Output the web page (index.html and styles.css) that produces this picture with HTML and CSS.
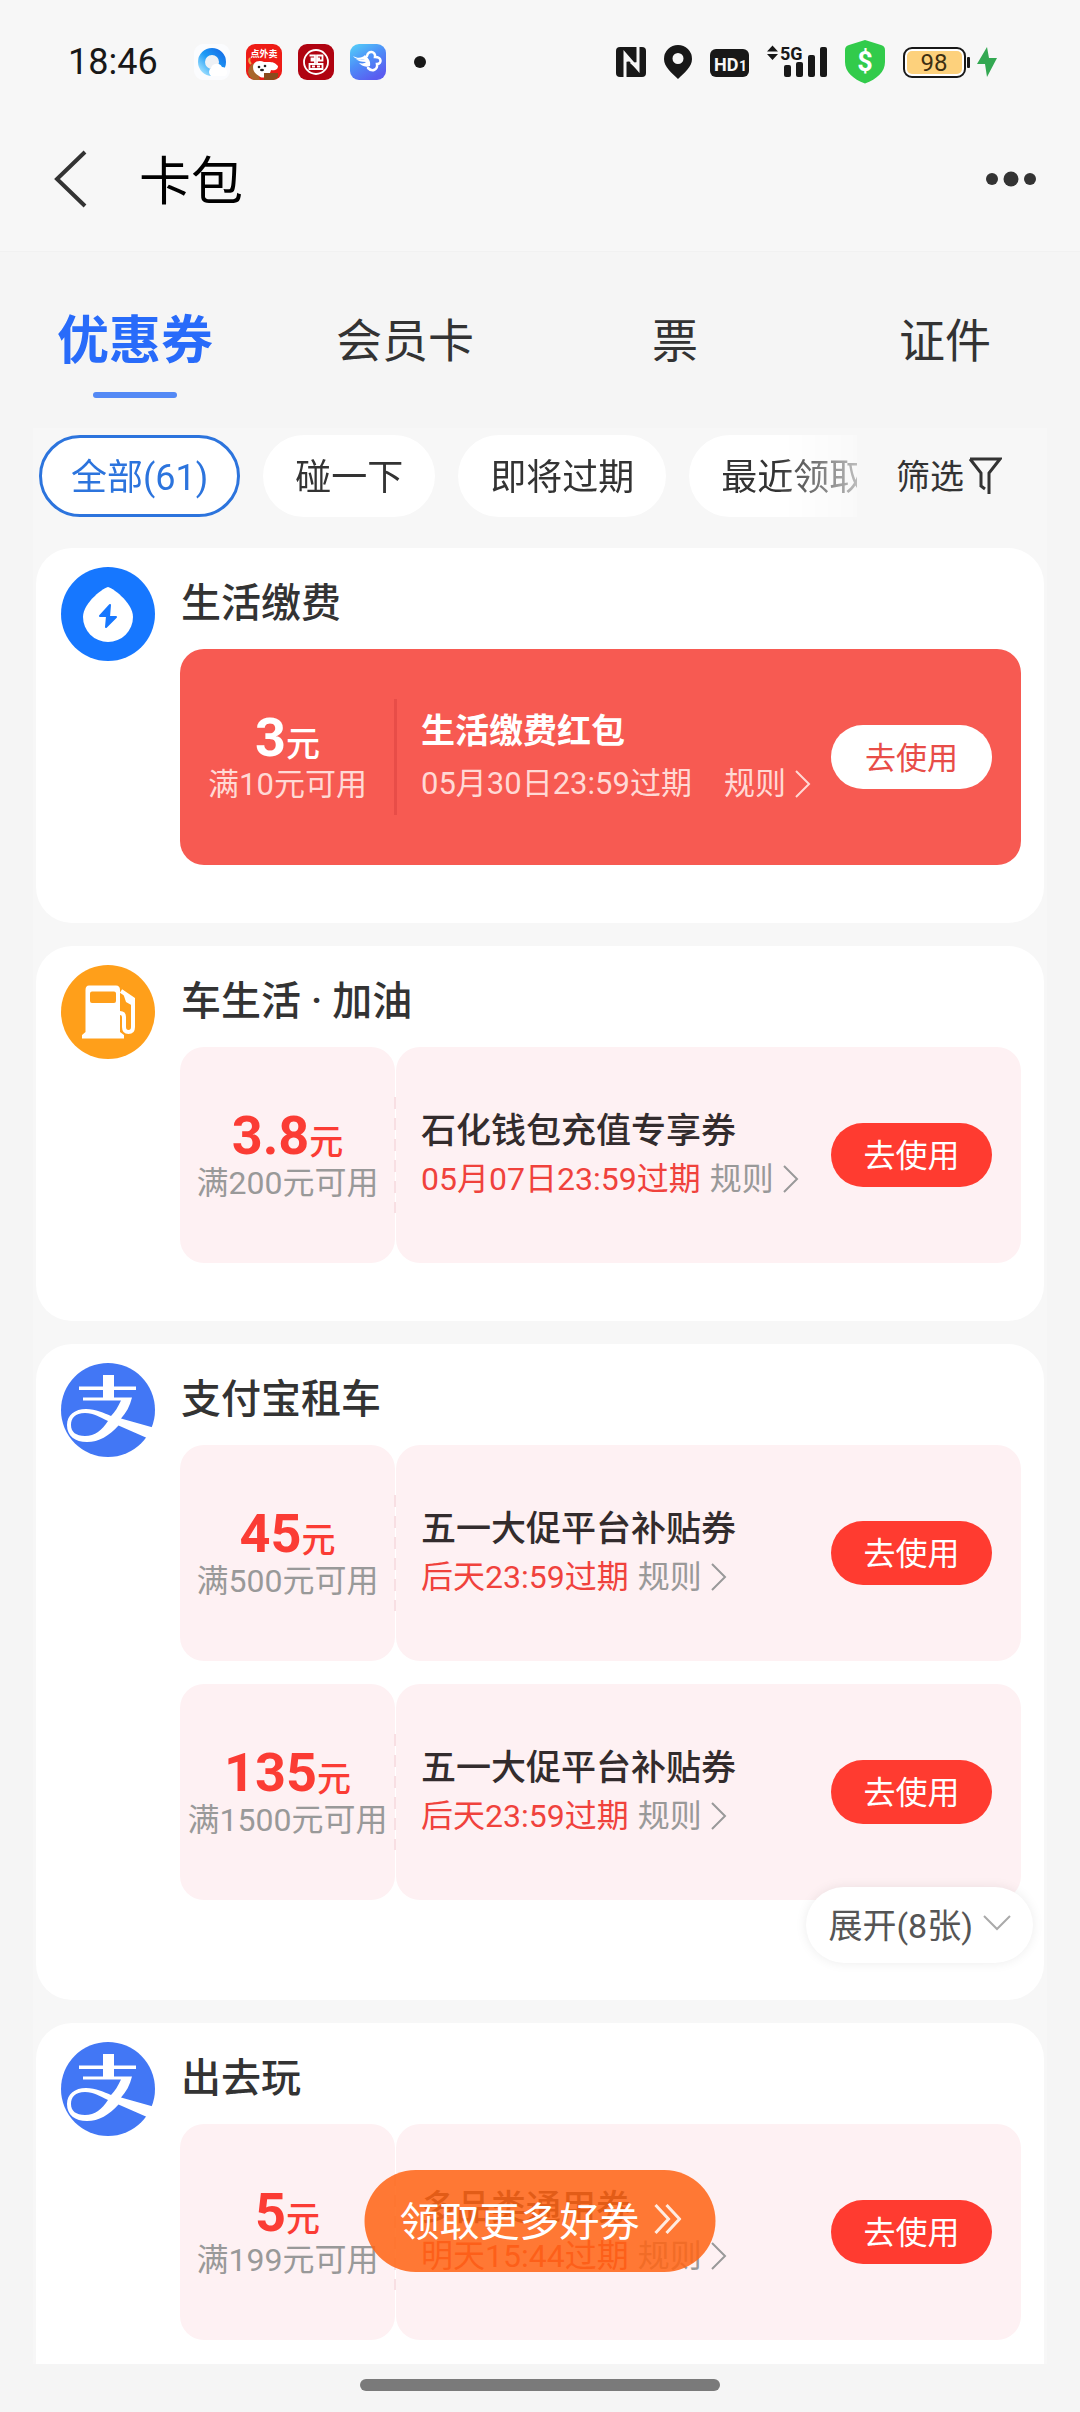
FILE: index.html
```html
<!DOCTYPE html>
<html lang="zh-CN">
<head>
<meta charset="utf-8">
<meta name="viewport" content="width=device-width, initial-scale=1">
<title>卡包</title>
<link rel="stylesheet" href="styles.css">
</head>
<body>
<svg class="defs" aria-hidden="true">
  <symbol id="chevron" viewBox="0 0 16 28"><path d="M1 1L14 14L1 27" fill="none" stroke="currentColor" stroke-width="2"/></symbol>
  <symbol id="alipay" viewBox="0 0 94 94">
    <circle cx="47" cy="47" r="47" fill="#4277f5"/>
    <g fill="#fff">
      <path d="M42 12H53V36H42Z"/>
      <path d="M18 23.500H75V27H18Z"/>
      <path fill-rule="evenodd" d="M22 34.500H71C69 43 65 50 60 55.500L92 64.500L86 75L57.500 62.500C48 73 38 79 26 79C14 79 6 73 6 62C6 52 14 46 25 46C35 46 43 50 50 53C54 49 57 44 60 37.500H22ZM47 58C38 54 33 50 24 50C14 50 10 55 10 62C10 69 15 73 24 73C34 73 41 67 47 58Z"/>
    </g>
  </symbol>
</svg>

<div class="statusbar">
  <time class="clock">18:46</time>
  <div class="notices">
    <svg width="36" height="36" viewBox="0 0 36 36">
      <defs><linearGradient id="ring" x1="0" y1="1" x2="1" y2="0"><stop offset="0" stop-color="#9fe0ff"/><stop offset=".5" stop-color="#1d9bf5"/><stop offset="1" stop-color="#1670e8"/></linearGradient></defs>
      <rect width="36" height="36" rx="9" fill="#fbfcfe"/>
      <circle cx="18" cy="18" r="10.500" fill="#eef1f5" stroke="url(#ring)" stroke-width="7"/>
      <path d="M17 32a5 5 0 0 1 0-8a6 6 0 0 1 11-1a5 5 0 0 1 3 9z" fill="#fff"/>
    </svg>
    <svg width="36" height="36" viewBox="0 0 36 36">
      <rect width="36" height="36" rx="9" fill="#ee1c16"/>
      <path d="M2 28C3 22 6 19 10 19L14 36H8C5 35 3 32 2 28Z" fill="#a8672c"/>
      <path d="M7 23C7 17 14 16 18 18C24 18 28 17 32 22C32 26 28 27 25 26C24 32 17 36 13 32C10 30 7 28 7 23Z" fill="#fff"/>
      <path d="M18 29H32V33Q30 36 27 36H18Z" fill="#8a4b1c"/>
      <circle cx="13" cy="23" r="1.300" fill="#222"/><circle cx="19" cy="22" r="1.300" fill="#222"/><ellipse cx="16" cy="26" rx="2" ry="1.300" fill="#222"/>
      <path d="M4 14q-2 3 1 6" stroke="#e9a94d" stroke-width="2" fill="none"/>
      <text x="18" y="13" class="app-label">点外卖</text>
    </svg>
    <svg width="36" height="36" viewBox="0 0 36 36">
      <rect width="36" height="36" rx="9" fill="#b00311"/>
      <circle cx="18" cy="18" r="12" fill="none" stroke="#fff" stroke-width="1.800"/>
      <path d="M11.500 11.500H17V14.500H13.500V16.500H17V20H11.500V25H24.500V20H19V16.500H24.500V11.500H19V14.500H22M14 22.500H17M19 22.500H22" fill="none" stroke="#fff" stroke-width="1.800"/>
    </svg>
    <svg width="36" height="36" viewBox="0 0 36 36">
      <defs><linearGradient id="sky" x1="0" y1="0" x2=".6" y2="1"><stop offset="0" stop-color="#55d3f8"/><stop offset=".5" stop-color="#4d90f8"/><stop offset="1" stop-color="#5a5cf0"/></linearGradient></defs>
      <rect width="36" height="36" rx="9" fill="url(#sky)"/>
      <path d="M3 12C8 15 12 14 15 11C18 14 21 17 20 22C15 24 11 21 9 19C13 20 15 19 16 18C11 18 8 17 6 15C10 16 13 16 15 15C9 16 5 15 3 12Z" fill="#fff"/>
      <path d="M17 12C18 6 26 7 25 13C32 13 32 20 27 20C28 26 22 28 18 24" fill="none" stroke="#fff" stroke-width="2.500" stroke-linecap="round"/>
    </svg>
    <span class="more-dot"></span>
  </div>
  <div class="signals">
    <svg width="30" height="52" viewBox="0 0 30 52">
      <rect y="11" width="30" height="30" rx="4" fill="#181818"/>
      <path d="M9 41V18L22 33V11" fill="none" stroke="#f7f7f7" stroke-width="3"/>
      <path d="M9 18V26L16 25ZM22 34V26L14 27Z" fill="#f7f7f7"/>
    </svg>
    <svg width="28" height="52" viewBox="0 0 28 52"><path fill="#181818" fill-rule="evenodd" d="M14 9a14 14 0 0 1 14 14c0 8-8 14-14 20C8 37 0 31 0 23A14 14 0 0 1 14 9Zm0 8a5 5 0 1 0 0 11a5 5 0 1 0 0-11Z"/></svg>
    <svg width="39" height="52" viewBox="0 0 39 52">
      <rect y="13" width="39" height="28" rx="6" fill="#181818"/>
      <text x="4" y="35" class="hd-label">HD</text><text x="29" y="35" class="hd-sub">1</text>
    </svg>
    <svg width="60" height="52" viewBox="0 0 60 52" fill="#181818">
      <path d="M5.500 9.500L11 15.500H0ZM5.500 24L11 18H0Z"/>
      <text x="13" y="24" class="net-label">5G</text>
      <rect x="17" y="29" width="7" height="12" rx="2"/><rect x="29" y="26" width="7" height="15" rx="2"/><rect x="41" y="19" width="7" height="22" rx="2"/><rect x="53" y="11" width="7" height="30" rx="2"/>
    </svg>
    <svg width="40" height="52" viewBox="0 0 40 52">
      <path d="M20 4L36 9Q40 10 40 14V26C40 36 32 43 20 47.500C8 43 0 36 0 26V14Q0 10 4 9Z" fill="#32cb4b"/>
      <text x="20" y="35" class="coin-label">$</text>
    </svg>
    <svg width="94" height="52" viewBox="0 0 94 52">
      <rect x="1" y="12" width="61" height="29" rx="8" fill="#fff" stroke="#181818" stroke-width="2"/>
      <rect x="4" y="15" width="55" height="23" rx="5" fill="#fdd17c"/>
      <rect x="64" y="21" width="3" height="11" rx="1" fill="#181818"/>
      <text x="31" y="35" class="battery-label">98</text>
      <path d="M84 11L74 28H82L84 41L94 22H86Z" fill="#33a852"/>
    </svg>
  </div>
</div>

<header class="navbar">
  <button class="icon-button" aria-label="返回"><svg width="34" height="58" viewBox="0 0 34 58"><path d="M31 2L3 29L31 56" fill="none" stroke="#333" stroke-width="4"/></svg></button>
  <h1 class="page-title">卡包</h1>
  <button class="icon-button" aria-label="更多"><svg width="50" height="16" viewBox="0 0 50 16" fill="#333"><circle cx="6" cy="8" r="6"/><circle cx="25" cy="8" r="7.500"/><circle cx="44" cy="8" r="6"/></svg></button>
</header>

<nav class="tabs">
  <a class="tab tab-active" href="#coupons">优惠券</a>
  <a class="tab" href="#members">会员卡</a>
  <a class="tab" href="#tickets">票</a>
  <a class="tab" href="#ids">证件</a>
</nav>

<main class="panel" id="coupons">
  <div class="filters">
    <div class="chips">
      <button class="chip chip-active">全部(61)</button>
      <button class="chip">碰一下</button>
      <button class="chip">即将过期</button>
      <button class="chip">最近领取</button>
    </div>
    <button class="filter-button"><span class="filter-label">筛选</span><svg width="34" height="38" viewBox="0 0 34 38"><path d="M2 2H32L21 16V37M13 30V16L2 2M13 29L17 32" fill="none" stroke="#333" stroke-width="3"/></svg></button>
  </div>

  <section class="card">
    <svg class="avatar" viewBox="0 0 94 94">
      <circle cx="47" cy="47" r="47" fill="#1677ff"/>
      <path d="M47 20C50 20 72 35 72 50A25 25 0 0 1 22 50C22 35 44 20 47 20Z" fill="#fff"/>
      <path d="M49 38L39 49H46L45 60L55 50H48Z" fill="#1677ff" stroke="#1677ff" stroke-width="2" stroke-linejoin="round"/>
    </svg>
    <div class="card-body">
      <h2 class="card-title">生活缴费</h2>
      <article class="coupon coupon-hero">
        <div class="value"><p class="amount">3<span class="unit">元</span></p><p class="condition">满10元可用</p></div>
        <div class="divider"></div>
        <div class="info">
          <div class="details"><h3 class="name">生活缴费红包</h3><p class="meta"><span class="expiry">05月30日23:59过期</span><button class="rules">规则<svg class="chevron"><use href="#chevron"/></svg></button></p></div>
          <button class="use-button">去使用</button>
        </div>
      </article>
    </div>
  </section>

  <section class="card">
    <svg class="avatar" viewBox="0 0 94 94">
      <circle cx="47" cy="47" r="47" fill="#ff9f1a"/>
      <path fill="#fff" fill-rule="evenodd" d="M28 20.500H55Q59 20.500 59 25V67L63 70V73.500H21V70L24.500 67V25Q24.500 20.500 28 20.500ZM31 26.500Q29 26.500 29 28.500V36Q29 38 31 38H53Q55 38 55 36V28.500Q55 26.500 53 26.500Z"/>
      <path d="M60 26L72 34V62Q72 67 67.500 67Q63 67 63 62V52Q63 48 59 48" fill="none" stroke="#fff" stroke-width="4"/>
      <path d="M62 28L72 34V41L65 37Z" fill="#fff"/>
    </svg>
    <div class="card-body">
      <h2 class="card-title">车生活 · 加油</h2>
      <article class="coupon">
        <div class="value"><p class="amount">3.8<span class="unit">元</span></p><p class="condition">满200元可用</p></div>
        <div class="divider"></div>
        <div class="info">
          <div class="details"><h3 class="name">石化钱包充值专享券</h3><p class="meta"><span class="expiry">05月07日23:59过期</span><button class="rules">规则<svg class="chevron"><use href="#chevron"/></svg></button></p></div>
          <button class="use-button">去使用</button>
        </div>
      </article>
    </div>
  </section>

  <section class="card card-expandable">
    <svg class="avatar"><use href="#alipay"/></svg>
    <div class="card-body">
      <h2 class="card-title">支付宝租车</h2>
      <article class="coupon">
        <div class="value"><p class="amount">45<span class="unit">元</span></p><p class="condition">满500元可用</p></div>
        <div class="divider"></div>
        <div class="info">
          <div class="details"><h3 class="name">五一大促平台补贴券</h3><p class="meta"><span class="expiry">后天23:59过期</span><button class="rules">规则<svg class="chevron"><use href="#chevron"/></svg></button></p></div>
          <button class="use-button">去使用</button>
        </div>
      </article>
      <article class="coupon">
        <div class="value"><p class="amount">135<span class="unit">元</span></p><p class="condition">满1500元可用</p></div>
        <div class="divider"></div>
        <div class="info">
          <div class="details"><h3 class="name">五一大促平台补贴券</h3><p class="meta"><span class="expiry">后天23:59过期</span><button class="rules">规则<svg class="chevron"><use href="#chevron"/></svg></button></p></div>
          <button class="use-button">去使用</button>
        </div>
      </article>
    </div>
    <button class="expand-button">展开(8张)<svg width="28" height="16" viewBox="0 0 28 16"><path d="M1 1L14 14L27 1" fill="none" stroke="#aaa" stroke-width="2"/></svg></button>
  </section>

  <section class="card">
    <svg class="avatar"><use href="#alipay"/></svg>
    <div class="card-body">
      <h2 class="card-title">出去玩</h2>
      <article class="coupon">
        <div class="value"><p class="amount">5<span class="unit">元</span></p><p class="condition">满199元可用</p></div>
        <div class="divider"></div>
        <div class="info">
          <div class="details"><h3 class="name">多品类通用券</h3><p class="meta"><span class="expiry">明天15:44过期</span><button class="rules">规则<svg class="chevron"><use href="#chevron"/></svg></button></p></div>
          <button class="use-button">去使用</button>
        </div>
      </article>
    </div>
  </section>
</main>

<a class="more-coupons" href="#more">领取更多好券<svg width="28" height="30" viewBox="0 0 28 30"><path d="M2 1L15 15L2 29M13 1L26 15L13 29" fill="none" stroke="#fff" stroke-opacity=".85" stroke-width="3"/></svg></a>

<footer class="gesture-area"><div class="gesture-bar"></div></footer>
</body>
</html>
```
FILE: styles.css
```css
* {
  box-sizing: border-box;
}

body {
  position: relative;
  display: flex;
  flex-direction: column;
  height: 100vh;
  margin: 0;
  overflow: hidden;
  background: #f5f5f5;
  color: #333;
  font-family: Roboto, "Noto Sans CJK SC", sans-serif;
}

h1, h2, h3, p {
  margin: 0;
  font-weight: 400;
}

button {
  padding: 0;
  border: 0;
  background: none;
  color: inherit;
  font: inherit;
  white-space: nowrap;
}

a {
  color: inherit;
  text-decoration: none;
}

svg {
  display: block;
  flex: none;
}

.defs {
  position: absolute;
  width: 0;
  height: 0;
}

/* Status bar */
.statusbar {
  display: flex;
  align-items: center;
  padding: 36px 83px 14px 68px;
  background: #f7f7f7;
}

.clock {
  width: 126px;
  color: #181818;
  font-size: 36px;
  line-height: 52px;
}

.notices,
.signals {
  display: flex;
  align-items: center;
}

.notices {
  gap: 16px;
}

.signals {
  gap: 18px;
  margin-left: auto;
}

.more-dot {
  width: 12px;
  height: 12px;
  margin-left: 12px;
  border-radius: 50%;
  background: #181818;
}

.app-label {
  fill: #fff;
  font-size: 9px;
  font-weight: 700;
  text-anchor: middle;
}

.hd-label {
  fill: #f7f7f7;
  font-size: 18px;
  font-weight: 700;
}

.hd-sub {
  fill: #f7f7f7;
  font-size: 14px;
  font-weight: 700;
}

.net-label {
  font-size: 18px;
  font-weight: 700;
}

.coin-label {
  fill: #fff;
  font-size: 27px;
  font-weight: 700;
  text-anchor: middle;
}

.battery-label {
  fill: #3d2f12;
  font-size: 24px;
  text-anchor: middle;
}

/* Navigation bar */
.navbar {
  display: flex;
  align-items: center;
  height: 150px;
  padding: 4px 44px 0 54px;
  border-bottom: 1px solid #f1f1f1;
  background: #f7f7f7;
}

.page-title {
  flex: 1;
  margin-left: 51px;
  padding-top: 8px;
  color: #000;
  font-size: 52px;
  line-height: 76px;
}

/* Tabs */
.tabs {
  display: grid;
  grid-template-columns: repeat(4, 1fr);
  padding: 50px 0 30px;
}

.tab {
  display: flex;
  flex-direction: column;
  align-items: center;
  height: 96px;
  font-size: 46px;
  line-height: 78px;
}

.tab-active {
  color: #286bfa;
  font-size: 52px;
  font-weight: 700;
  line-height: 80px;
}

.tab-active::after {
  width: 84px;
  height: 6px;
  margin-top: 10px;
  border-radius: 3px;
  background: #5389f5;
  content: "";
}

/* Coupon panel */
.panel {
  display: flex;
  flex: 1;
  flex-direction: column;
  gap: 23px;
  min-height: 0;
  margin: 0 33px;
  padding: 7px 3px 0;
  overflow: hidden;
  background: #f7f7f7;
}

.filters {
  display: flex;
  flex: none;
  align-items: center;
  gap: 39px;
  margin-bottom: 8px;
  padding: 0 42px 0 3px;
}

.chips {
  display: flex;
  flex: 1;
  gap: 23px;
  min-width: 0;
  overflow: hidden;
  mask-image: linear-gradient(to left, rgba(0, 0, 0, 0.3), #000 80px);
}

.chip {
  flex: none;
  height: 82px;
  padding: 0 32px 4px;
  border-radius: 41px;
  background: #fff;
  font-size: 36px;
}

.chip-active {
  padding: 0 29px 4px;
  border: 3px solid #2c74dd;
  color: #2c74dd;
}

.filter-button {
  display: flex;
  align-items: center;
  gap: 4px;
  font-size: 34px;
}

.filter-label {
  padding-bottom: 4px;
}

.card {
  position: relative;
  display: flex;
  flex: none;
  gap: 25px;
  padding: 19px 23px 58px 25px;
  border-radius: 36px;
  background: #fff;
}

.card-expandable {
  padding-bottom: 100px;
}

.avatar {
  width: 94px;
  height: 94px;
}

.card-body {
  display: flex;
  flex: 1;
  flex-direction: column;
  gap: 23px;
  min-width: 0;
}

.card-title {
  padding: 14px 0 0 1px;
  font-size: 40px;
  font-weight: 500;
  line-height: 45px;
}

/* Coupons */
.coupon {
  display: flex;
  align-items: center;
  height: 216px;
}

.value,
.info {
  align-self: stretch;
  border-radius: 24px;
  background: #fef1f3;
}

.value {
  display: flex;
  flex: none;
  flex-direction: column;
  justify-content: center;
  width: 215px;
  text-align: center;
}

.amount {
  color: #fb3c34;
  font-size: 54px;
  font-weight: 700;
  line-height: 50px;
}

.unit {
  font-size: 34px;
  font-weight: 500;
}

.condition {
  color: #999;
  font-size: 32px;
  line-height: 32px;
  white-space: nowrap;
}

.divider {
  flex: none;
  width: 3px;
  height: 116px;
  margin: 0 -1px;
  background: repeating-linear-gradient(#f8dfe3 0 12px, transparent 12px 21px);
}

.info {
  display: flex;
  flex: 1;
  align-items: center;
  justify-content: space-between;
  padding: 0 29px 0 25px;
}

.name {
  color: #332c2d;
  font-size: 35px;
  font-weight: 500;
  line-height: 48px;
}

.meta {
  display: flex;
  gap: 9px;
  color: #f0423c;
  font-size: 32px;
  line-height: 46px;
}

.rules {
  display: flex;
  align-items: center;
  gap: 9px;
  color: #999;
}

.chevron {
  width: 16px;
  height: 28px;
}

.use-button {
  width: 161px;
  height: 64px;
  padding-bottom: 4px;
  border-radius: 32px;
  background: #ff3b30;
  color: #fff;
  font-size: 32px;
}

.coupon-hero {
  border-radius: 24px;
  background: #f75a52;
}

.coupon-hero .value,
.coupon-hero .info {
  background: none;
}

.coupon-hero .divider {
  background: #e84d48;
}

.coupon-hero .amount,
.coupon-hero .name {
  color: #fff;
}

.coupon-hero .condition,
.coupon-hero .meta,
.coupon-hero .rules {
  color: #ffd9d5;
  font-size: 31px;
}

.coupon-hero .name {
  font-size: 34px;
  font-weight: 700;
  line-height: 54px;
}

.coupon-hero .meta {
  gap: 32px;
  line-height: 52px;
}

.coupon-hero .use-button {
  background: #fff;
  color: #e84d48;
  font-size: 31px;
}

.expand-button {
  position: absolute;
  right: 11px;
  bottom: 37px;
  display: flex;
  align-items: center;
  gap: 10px;
  height: 76px;
  padding: 0 22px 4px;
  border-radius: 38px;
  background: #fff;
  box-shadow: 0 0 12px rgba(0, 0, 0, 0.08);
  color: #555;
  font-size: 34px;
}

/* Floating link over the list */
.more-coupons {
  position: absolute;
  bottom: 140px;
  left: 50%;
  display: flex;
  align-items: center;
  gap: 14px;
  height: 102px;
  padding: 0 34px 4px 35px;
  border-radius: 51px;
  background: rgba(255, 100, 20, 0.86);
  color: #fff;
  font-size: 40px;
  transform: translateX(-50%);
}

.gesture-area {
  flex: none;
  padding: 15px 0 21px;
}

.gesture-bar {
  width: 360px;
  height: 12px;
  margin: 0 auto;
  border-radius: 6px;
  background: #7a7a7a;
}
```
